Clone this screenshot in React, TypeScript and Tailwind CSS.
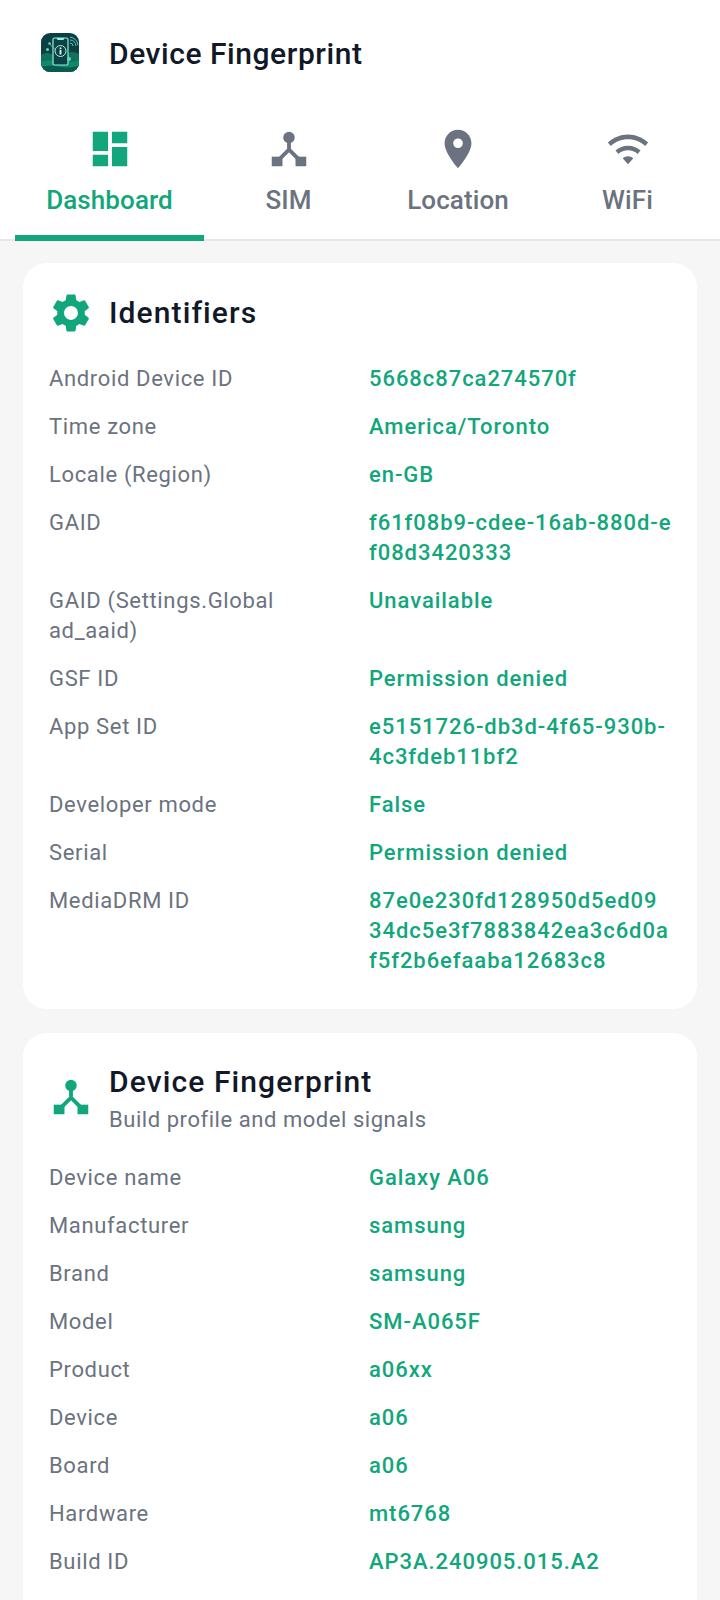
import type { ReactNode } from 'react'

const font = { fontFamily: 'Roboto, sans-serif' }

function DashboardIcon() {
  return (
    <svg width="46" height="46" viewBox="0 0 24 24" fill="currentColor">
      <path d="M3 13h8V3H3v10zm0 8h8v-6H3v6zm10 0h8V11h-8v10zm0-18v6h8V3h-8z" />
    </svg>
  )
}

function HubIcon() {
  return (
    <svg width="46" height="46" viewBox="0 0 24 24" fill="currentColor">
      <circle cx="12" cy="6" r="3" />
      <path d="M12 8v4.300M12 12.300l-4.700 4.700M12 12.300l4.700 4.700" fill="none" stroke="currentColor" strokeWidth="2" />
      <rect x="3" y="16" width="5.600" height="5" />
      <rect x="15.400" y="16" width="5.600" height="5" />
    </svg>
  )
}

function PinIcon() {
  return (
    <svg width="46" height="46" viewBox="0 0 24 24" fill="currentColor">
      <path d="M12 2C8.130 2 5 5.130 5 9c0 5.250 7 13 7 13s7-7.750 7-13c0-3.870-3.130-7-7-7zm0 9.500a2.500 2.500 0 0 1 0-5 2.500 2.500 0 0 1 0 5z" />
    </svg>
  )
}

function WifiIcon() {
  return (
    <svg width="46" height="46" viewBox="0 0 24 24" fill="currentColor">
      <path d="M1.500 8.600 3 10.400C5.400 8.200 8.500 6.900 12 6.900s6.600 1.300 9 3.500l1.500-1.800C19.700 6 16 4.400 12 4.400S4.300 6 1.500 8.600z" />
      <path d="M5.500 12.800 7 14.600c1.300-1.200 3.100-1.900 5-1.900s3.700.7 5 1.900l1.500-1.800C16.800 11.200 14.500 10.300 12 10.300s-4.800.9-6.500 2.500z" />
      <path d="M9.200 16.800 12 20l2.800-3.200c-.8-.6-1.700-1-2.800-1s-2 .4-2.800 1z" />
    </svg>
  )
}

function GearIcon() {
  return (
    <svg width="46" height="46" viewBox="0 0 24 24" fill="currentColor">
      <path d="M19.140 12.940c.04-.3.060-.61.060-.94 0-.32-.02-.64-.07-.94l2.030-1.580a.49.49 0 0 0 .12-.61l-1.920-3.320a.488.488 0 0 0-.59-.22l-2.390.96c-.5-.38-1.030-.7-1.620-.94l-.36-2.540a.484.484 0 0 0-.48-.41h-3.840c-.24 0-.43.17-.47.41l-.36 2.540c-.59.24-1.130.57-1.620.94l-2.390-.96c-.22-.08-.47 0-.59.22L2.740 8.870c-.12.21-.08.47.12.61l2.030 1.580c-.05.3-.09.63-.09.94s.02.64.07.94l-2.030 1.580a.49.49 0 0 0-.12.61l1.920 3.320c.12.22.37.29.59.22l2.390-.96c.5.38 1.030.7 1.620.94l.36 2.540c.05.24.24.41.48.41h3.840c.24 0 .44-.17.47-.41l.36-2.540c.59-.24 1.130-.56 1.620-.94l2.390.96c.22.08.47 0 .59-.22l1.920-3.320c.12-.22.070-.47-.12-.61l-2.010-1.580zM12 15.600c-1.980 0-3.600-1.620-3.600-3.600s1.620-3.600 3.600-3.600 3.600 1.620 3.600 3.600-1.620 3.600-3.600 3.600z" />
    </svg>
  )
}

function AppLogo() {
  return (
    <svg width="38" height="39" viewBox="0 0 38 39" className="shrink-0">
      <defs>
        <clipPath id="logoClip">
          <rect width="38" height="39" rx="9" />
        </clipPath>
      </defs>
      <g clipPath="url(#logoClip)">
        <rect width="38" height="39" fill="#0c3f44" />
        <path d="M0 22c5-3 9-2 13 0s12 2 14-1 7-2 11 0v18H0z" fill="#12705f" />
        <path d="M0 29c8-3 14-1 20 0s12 0 18-2v12H0z" fill="#0d8a6c" />
        <path d="M0 34c8-2 14-1 20 0s12 0 18-1v6H0z" fill="#0a5a50" />
        <rect x="12" y="5" width="15" height="27" rx="1.500" fill="#0c4145" stroke="#8ff0d4" strokeWidth="1.200" />
        <path d="M15.500 5h8l-1 2h-6z" fill="#8ff0d4" />
        <circle cx="19.500" cy="18" r="5.500" fill="#0c4145" stroke="#a8f5de" strokeWidth="1" />
        <rect x="18.600" y="17" width="1.800" height="4.500" fill="#e6fff8" />
        <rect x="18.600" y="14.500" width="1.800" height="1.700" fill="#e6fff8" />
        <circle cx="6.500" cy="16.500" r="1.500" fill="#63d6b8" />
        <circle cx="8.500" cy="10.500" r="1.300" fill="#63d6b8" />
        <path d="M8.500 10.500l5 5.500" stroke="#63d6b8" strokeWidth=".8" />
        <circle cx="28" cy="26" r="2" fill="#63d6b8" />
        <path d="M29 10a3 3 0 0 1 3 3M29 7a6 6 0 0 1 6 6M29 4a9 9 0 0 1 8 8" fill="none" stroke="#63d6b8" strokeWidth=".9" />
      </g>
    </svg>
  )
}

function Tab({ icon, label, width, active }: { icon: ReactNode; label: string; width: string; active?: boolean }) {
  return (
    <div className={`${width} relative flex h-[134px] flex-col items-center ${active ? 'text-[#12a67c]' : 'text-[#6b7280]'}`}>
      <div className="mt-[20.5px]">{icon}</div>
      <span className="mt-[12px] text-[26px] leading-[32px] font-medium tracking-[0.1px]">{label}</span>
      {active && <div className="absolute bottom-[-2px] left-0 right-0 h-[6px] bg-[#12a67c]" />}
    </div>
  )
}

function Row({ label, value }: { label: string; value: string }) {
  return (
    <div className="grid grid-cols-[320px_1fr] text-[22px] leading-[30px]">
      <div className="pr-[60px] tracking-[0.65px] text-[#6b7280]">{label}</div>
      <div className="font-medium tracking-[0.95px] whitespace-pre text-[#12a67c]">{value}</div>
    </div>
  )
}

function Card({ children }: { children: ReactNode }) {
  return <section className="mx-[23px] rounded-[24px] bg-white px-[26px] pt-[26px] pb-[33px]">{children}</section>
}

const identifiers = [
  ['Android Device ID', '5668c87ca274570f'],
  ['Time zone', 'America/Toronto'],
  ['Locale (Region)', 'en-GB'],
  ['GAID', 'f61f08b9-cdee-16ab-880d-e\nf08d3420333'],
  ['GAID (Settings.Global ad_aaid)', 'Unavailable'],
  ['GSF ID', 'Permission denied'],
  ['App Set ID', 'e5151726-db3d-4f65-930b-\n4c3fdeb11bf2'],
  ['Developer mode', 'False'],
  ['Serial', 'Permission denied'],
  ['MediaDRM ID', '87e0e230fd128950d5ed09\n34dc5e3f7883842ea3c6d0a\nf5f2b6efaaba12683c8']
]

const fingerprint = [
  ['Device name', 'Galaxy A06'],
  ['Manufacturer', 'samsung'],
  ['Brand', 'samsung'],
  ['Model', 'SM-A065F'],
  ['Product', 'a06xx'],
  ['Device', 'a06'],
  ['Board', 'a06'],
  ['Hardware', 'mt6768'],
  ['Build ID', 'AP3A.240905.015.A2'],
  ['Build version code', '35']
]

export default function App() {
  return (
    <div className="h-[1600px] w-[720px] overflow-hidden bg-[#f6f6f7]" style={font}>
      <header className="border-b-2 border-[#e6e6ec] bg-white">
        <div className="flex h-[105px] items-center pl-[41px]">
          <AppLogo />
          <h1 className="mt-[2px] ml-[30px] text-[30px] leading-[36px] font-medium tracking-[0.55px] text-[#111827]">Device Fingerprint</h1>
        </div>
        <nav className="flex pl-[15px]">
          <Tab active width="w-[189px]" icon={<DashboardIcon />} label="Dashboard" />
          <Tab width="w-[169px]" icon={<HubIcon />} label="SIM" />
          <Tab width="w-[170px]" icon={<PinIcon />} label="Location" />
          <Tab width="w-[169px]" icon={<WifiIcon />} label="WiFi" />
        </nav>
      </header>

      <main className="flex flex-col gap-[24px] pt-[22px]">
        <Card>
          <div className="flex items-center gap-[15px] pb-[28px]">
            <span className="-ml-[1px] text-[#12a67c]"><GearIcon /></span>
            <h2 className="mt-[1px] text-[30px] leading-[46px] font-medium tracking-[1.1px] text-[#111827]">Identifiers</h2>
          </div>
          <div className="flex flex-col gap-[18px]">
            {identifiers.map(([k, v]) => (
              <Row key={k} label={k} value={v} />
            ))}
          </div>
        </Card>
        <Card>
          <div className="flex items-center gap-[15px] pb-[28px]">
            <span className="-ml-[1px] text-[#12a67c]"><HubIcon /></span>
            <div>
              <h2 className="text-[30px] leading-[46px] font-medium tracking-[1.1px] text-[#111827]">Device Fingerprint</h2>
              <p className="text-[22px] leading-[30px] tracking-[0.55px] text-[#6b7280]">Build profile and model signals</p>
            </div>
          </div>
          <div className="flex flex-col gap-[18px]">
            {fingerprint.map(([k, v]) => (
              <Row key={k} label={k} value={v} />
            ))}
          </div>
        </Card>
      </main>
    </div>
  )
}
